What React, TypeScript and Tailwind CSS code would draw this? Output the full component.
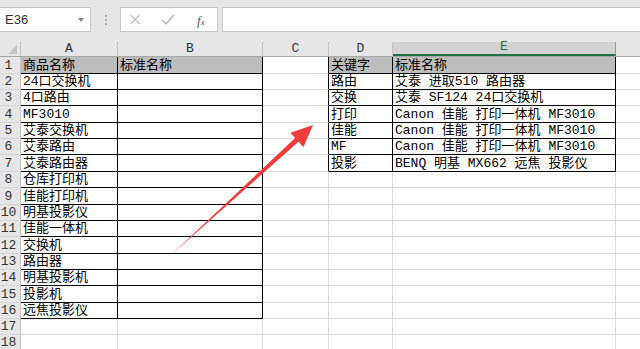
import React from "react";

const A = ["商品名称","24口交换机","4口路由","MF3010","艾泰交换机","艾泰路由","艾泰路由器","仓库打印机","佳能打印机","明基投影仪","佳能一体机","交换机","路由器","明基投影机","投影机","远焦投影仪"];
const D = ["关键字","路由","交换","打印","佳能","MF","投影"];
const E = ["标准名称","艾泰 进取510 路由器","艾泰 SF124 24口交换机","Canon 佳能 打印一体机 MF3010","Canon 佳能 打印一体机 MF3010","Canon 佳能 打印一体机 MF3010","BENQ 明基 MX662 远焦 投影仪"];
const H = ["h-[17px]","h-4","h-4","h-[17px]","h-4","h-4","h-[17px]","h-4","h-[17px]","h-4","h-4","h-[17px]","h-4","h-4","h-[17px]","h-4","h-4","h-4"];

const font = { fontFamily: '"Liberation Mono", "Noto Sans CJK SC", monospace' };

function Cell({ w, text, black, blackRight, gray }: { w: string; text?: string; black?: boolean; blackRight?: boolean; gray?: boolean }) {
  const rb = black || blackRight ? "border-r-black" : "border-r-[#dadada]";
  const bb = black ? "border-b-black" : "border-b-[#dadada]";
  const bg = gray ? "bg-[#bdbdbd]" : "bg-white";
  return (
    <div className={`${w} shrink-0 h-full border-r border-b ${rb} ${bb} ${bg} flex items-end pl-[2px] overflow-hidden whitespace-pre text-[13px] leading-[15px] text-black`}>
      {text}
    </div>
  );
}

export default function App() {
  return (
    <div className="relative w-[640px] h-[349px] overflow-hidden bg-white" style={font}>
      {/* top bar */}
      <div className="h-[42px] bg-[#e6e6e6] flex items-start pt-[7px]">
        <div className="w-[91px] h-[25px] bg-white border border-[#c8c8c8] border-l-0 flex items-center justify-between pl-[5px] pr-[6px]">
          <span className="text-[13px] text-[#333]" style={{ fontFamily: '"Liberation Sans", Arial, sans-serif' }}>E36</span>
          <span className="w-0 h-0 border-l-[3px] border-r-[3px] border-t-[4px] border-l-transparent border-r-transparent border-t-[#888]" />
        </div>
        <div className="w-[29px] h-[25px] flex flex-col items-center justify-center gap-[2px]">
          <span className="w-[2px] h-[2px] bg-[#b0b0b0]" />
          <span className="w-[2px] h-[2px] bg-[#b0b0b0]" />
          <span className="w-[2px] h-[2px] bg-[#b0b0b0]" />
        </div>
        <div className="relative w-[98px] h-[25px] bg-white border border-[#c8c8c8] flex items-center">
          <svg width="98" height="23" viewBox="0 0 98 23">
            <path d="M10 7 L19 16 M19 7 L10 16" stroke="#b9b9b9" strokeWidth="1.3" fill="none" />
            <path d="M42 12 L46 16 L54 7" stroke="#b9b9b9" strokeWidth="1.6" fill="none" />
          </svg>
          <span className="absolute left-[76px] top-[3px] text-[13px] italic text-[#555]" style={{ fontFamily: '"Liberation Serif", serif' }}>
            f<span className="text-[9px]">x</span>
          </span>
        </div>
        <div className="ml-[4px] flex-1 h-[25px] bg-white border border-[#c8c8c8] border-r-0" />
      </div>

      {/* column headers */}
      <div className="h-[15px] flex text-[13px] leading-[14px] text-[#333] border-b border-b-[#a8a8a8] bg-[#e6e6e6]">
        <div className="w-[21px] shrink-0 h-full border-r border-[#c4c4c4] flex items-end justify-end pr-[3px] pb-[2px]">
          <svg width="9" height="9" viewBox="0 0 9 9">
            <polygon points="9,0 9,9 0,9" fill="#c4c4c4" />
          </svg>
        </div>
        <div className="w-[97px] shrink-0 h-full border-r border-[#c4c4c4] flex items-end justify-center">A</div>
        <div className="w-[145px] shrink-0 h-full border-r border-[#c4c4c4] flex items-end justify-center">B</div>
        <div className="w-[66px] shrink-0 h-full border-r border-[#c4c4c4] flex items-end justify-center">C</div>
        <div className="w-[64px] shrink-0 h-full border-r border-[#c4c4c4] flex items-end justify-center">D</div>
        <div className="w-[223px] shrink-0 h-full border-r border-[#9a9a9a] border-b-2 border-b-[#217346] bg-[#d2d2d2] text-[#217346] flex items-end justify-center">E</div>
        <div className="flex-1 h-full" />
      </div>

      {/* rows */}
      {H.map((h, i) => {
        const r = i + 1;
        const t1 = r <= 16;
        const t2 = r <= 7;
        return (
          <div key={r} className={`${h} flex`}>
            <div className="w-[21px] shrink-0 h-full bg-[#e6e6e6] border-r border-r-[#c4c4c4] border-b border-b-[#d4d4d4] flex items-end justify-center pr-[3px] text-[13px] leading-[15px] text-[#333]">
              {r}
            </div>
            <Cell w="w-[97px]" text={A[i]} black={t1} gray={r === 1} />
            <Cell w="w-[145px]" text={r === 1 ? "标准名称" : undefined} black={t1} gray={r === 1} />
            <Cell w="w-[66px]" blackRight={t2} />
            <Cell w="w-[64px]" text={D[i]} black={t2} gray={r === 1} />
            <Cell w="w-[223px]" text={E[i]} black={t2} gray={r === 1} />
            <div className="flex-1 h-full border-b border-b-[#dadada] bg-white" />
          </div>
        );
      })}

      {/* arrow */}
      <svg className="absolute left-0 top-0 pointer-events-none" width="640" height="349" viewBox="0 0 640 349">
        <polygon points="171,255 298.5,141.7 303.5,147 313,125 290.5,132.8 295.1,138.1" fill="#f23c3c" />
      </svg>
    </div>
  );
}
